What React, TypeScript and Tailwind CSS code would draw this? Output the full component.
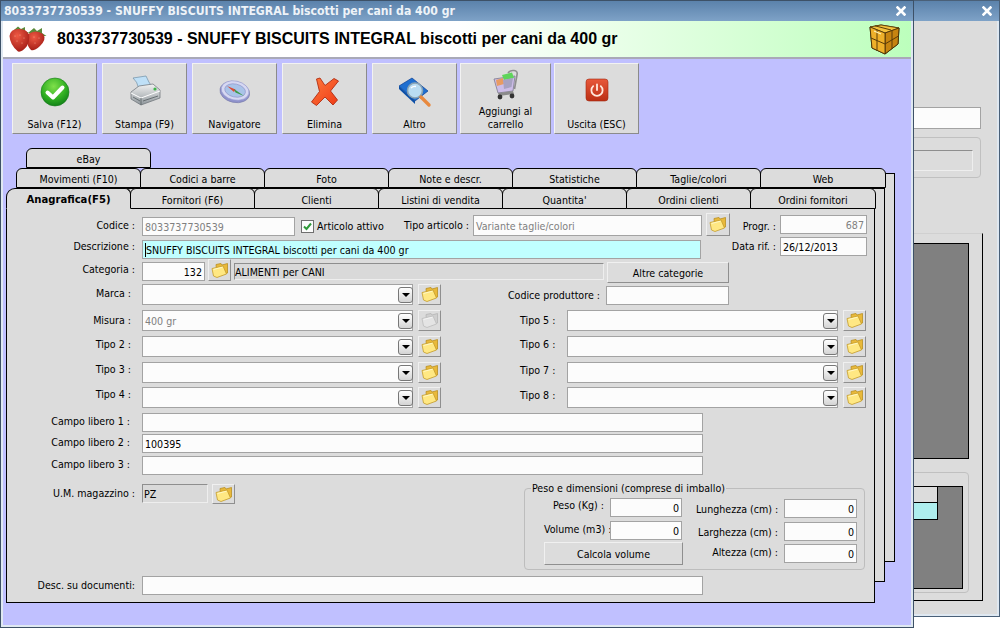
import React from "react";

const Label = ({ className = "", left = false, children }: { className?: string; left?: boolean; children: React.ReactNode }) => (
  <span className={"block shrink-0 whitespace-nowrap leading-[14px] " + (left ? "text-left " : "text-right ") + className}>{children}</span>
);

const Field = ({ className = "", cyan = false, children }: { className?: string; cyan?: boolean; children?: React.ReactNode }) => (
  <div className={"shrink-0 flex items-center px-[2px] border border-[#a3a3a3] whitespace-nowrap overflow-hidden leading-[14px] " + (cyan ? "bg-[#c0ffff] " : "bg-[#fcfcfc] ") + className}>{children}</div>
);

const Sunken = ({ className = "", children }: { className?: string; children?: React.ReactNode }) => (
  <div className={"shrink-0 flex items-center border border-t-[#8e8e8e] border-l-[#8e8e8e] border-r-[#eeeeee] border-b-[#eeeeee] bg-[#d9d9d9] leading-[14px] whitespace-nowrap " + className}>{children}</div>
);

const Btn = ({ className = "", children }: { className?: string; children?: React.ReactNode }) => (
  <div className={"shrink-0 flex items-center justify-center border border-t-[#f0f0f0] border-l-[#f0f0f0] border-r-[#8f8f8f] border-b-[#8f8f8f] bg-[#dcdcdc] leading-[14px] " + className}>{children}</div>
);

const FolderIcon = ({ gray = false }: { gray?: boolean }) => (
  <svg width="18" height="17" viewBox="0 0 18 17">
    <path d="M5 2.5 L10 1.5 L11 3 L16.5 1.5 L16.5 11 L6 14.5 Z" fill={gray ? "#cfcfcf" : "#e9b93a"} stroke={gray ? "#b5b5b5" : "#b98f22"} strokeWidth="0.8" />
    <path d="M1 6.5 L12 4 L15.5 12 L6 15.5 L2.5 14 Z" fill={gray ? "#e4e4e4" : "#ffe883"} stroke={gray ? "#bdbdbd" : "#c49c2c"} strokeWidth="0.8" />
    <path d="M2.5 7.5 L11.5 5.2" stroke={gray ? "#f4f4f4" : "#fff7c4"} strokeWidth="1" />
  </svg>
);

const Folder = ({ className = "", gray = false }: { className?: string; gray?: boolean }) => (
  <Btn className={className}><FolderIcon gray={gray} /></Btn>
);

const Combo = ({ className = "", text }: { className?: string; text?: string }) => (
  <div className={"shrink-0 flex items-center justify-between pl-[2px] h-[21px] border border-[#a3a3a3] bg-[#fcfcfc] leading-[14px] " + className}>
    <span className="text-[#808080]">{text}</span>
    <span className="-mr-px flex items-center justify-center w-[15px] h-[16px] rounded-[3px] border border-[#777777] bg-gradient-to-b from-[#ffffff] to-[#d4d4d4]">
      <span className="block w-0 h-0 border-x-[4px] border-x-transparent border-t-[4px] border-t-black" />
    </span>
  </div>
);

const Tab = ({ children, wide = false, active = false }: { children: React.ReactNode; wide?: boolean; active?: boolean }) => (
  <div
    className={
      "shrink-0 -mr-px flex items-center justify-center pt-[2px] rounded-t-[6px] border border-black leading-[14px] bg-[#dcdcdc] " +
      (wide ? "w-[126px] " : "w-[125px] ") +
      (active ? "border-b-[#dcdcdc] font-bold text-[11.2px] relative z-10 rounded-tl-[9px]" : "")
    }
  >
    {children}
  </div>
);

const CheckIcon = () => (
  <svg width="32" height="32" viewBox="0 0 32 32">
    <defs>
      <radialGradient id="chk" cx="45%" cy="30%" r="75%">
        <stop offset="0" stopColor="#7fe04a" />
        <stop offset="0.6" stopColor="#2fae22" />
        <stop offset="1" stopColor="#0d7a16" />
      </radialGradient>
    </defs>
    <circle cx="16" cy="16" r="14" fill="url(#chk)" stroke="#1a7a1e" strokeWidth="0.6" />
    <path d="M8.5 16.5 L14 21.5 L23.5 11.5" fill="none" stroke="#ffffff" strokeWidth="4" strokeLinejoin="round" strokeLinecap="round" />
  </svg>
);

const PrinterIcon = () => (
  <svg width="32" height="32" viewBox="0 0 32 32">
    <defs>
      <linearGradient id="pr" x1="0" y1="0" x2="0" y2="1">
        <stop offset="0" stopColor="#f2f2f2" />
        <stop offset="1" stopColor="#8f979c" />
      </linearGradient>
    </defs>
    <path d="M4 3 L17 1 Q20 8 22.5 11 L10 14 Q8 6 4 3Z" fill="#bfe0f7" stroke="#6f8fa6" strokeWidth="0.7" />
    <path d="M2 17 L10 11 L24 9 L31 15 L31 23 L12 30 L2 24Z" fill="url(#pr)" stroke="#686f74" strokeWidth="0.7" />
    <path d="M2 18 L12 23 L31 16" fill="none" stroke="#ffffff" strokeWidth="1" />
    <path d="M12 23 L12 30 M4 22 L11 26 M14 26 L29 21" stroke="#5f666a" strokeWidth="0.9" fill="none" />
    <circle cx="26" cy="14" r="1.6" fill="#3fb54a" />
  </svg>
);

const CompassIcon = () => (
  <svg width="32" height="32" viewBox="0 0 32 32">
    <g transform="rotate(12 16 16)">
      <ellipse cx="16" cy="17" rx="15" ry="10.5" fill="#8f92cc" stroke="#777aa8" strokeWidth="0.6" />
      <ellipse cx="16" cy="15.5" rx="14" ry="9.5" fill="#d6d8f2" stroke="#9a9dd0" strokeWidth="0.6" />
      <ellipse cx="16" cy="15.5" rx="10.5" ry="6.5" fill="#a9c3e8" stroke="#8b8ec4" strokeWidth="0.6" />
    </g>
    <path d="M8 11 L16.5 14.5 L15 17Z" fill="#dd4a32" />
    <path d="M15 14 L25 21 L16.5 17.5Z" fill="#3c9a44" />
  </svg>
);

const CrossIcon = () => (
  <svg width="32" height="32" viewBox="0 0 32 32">
    <defs>
      <linearGradient id="crs" x1="0" y1="0" x2="1" y2="1">
        <stop offset="0" stopColor="#ff7a3c" />
        <stop offset="1" stopColor="#ee3a16" />
      </linearGradient>
    </defs>
    <path d="M7.5 3 L11 2 L16 9.5 L25 2.5 L29.5 5 L21.5 15 L28.5 24 L24 29 L16 21 L7.5 29.5 L2.5 26 L10.5 15.5 Z" fill="url(#crs)" stroke="#b12c12" strokeWidth="0.9" strokeLinejoin="round" />
  </svg>
);

const BookIcon = () => (
  <svg width="34" height="32" viewBox="0 0 34 32">
    <path d="M1 9 L14 1 L30 14 L17 24Z" fill="#1f6fd0" stroke="#0c3f94" strokeWidth="0.7" />
    <path d="M1 9 L17 24 L17 27 L1 12Z" fill="#0c4fa6" />
    <circle cx="17" cy="13.5" r="7.5" fill="#b9dcf2" stroke="#8aa4b4" strokeWidth="1.6" />
    <path d="M13 11 Q15 9 18 9.5" stroke="#ffffff" strokeWidth="1.4" fill="none" />
    <path d="M23 20 L31 28" stroke="#e8893e" strokeWidth="3.4" strokeLinecap="round" />
  </svg>
);

const CartIcon = () => (
  <svg width="26" height="31" viewBox="0 0 26 31">
    <path d="M15 4 Q17 1 21 1.5 Q25 2 24 6 L21.5 20" fill="none" stroke="#8e8e8e" strokeWidth="1.6" />
    <path d="M1 10 L22 7 L20 22 L5 24Z" fill="#cdbde8" stroke="#7c7a8e" strokeWidth="0.8" />
    <path d="M3 11 L10 9 L11 15 L4 17Z" fill="#e89b62" />
    <path d="M9 6 L19 3.5 L21 9 L11 11Z" fill="#5fd45a" />
    <path d="M10 11 L20 9 L18.5 18 L11 20Z" fill="#a7a2c2" />
    <path d="M5 24 L20 22 L21 25 L6 27Z" fill="#8b8b8b" />
    <circle cx="7" cy="28" r="2.4" fill="#333333" />
    <circle cx="19" cy="27" r="2.4" fill="#333333" />
  </svg>
);

const PowerIcon = () => (
  <svg width="24" height="24" viewBox="0 0 24 24">
    <defs>
      <linearGradient id="pw" x1="0" y1="0" x2="0" y2="1">
        <stop offset="0" stopColor="#e8583a" />
        <stop offset="1" stopColor="#bb2f14" />
      </linearGradient>
    </defs>
    <rect x="1" y="1" width="22" height="22" rx="3" fill="url(#pw)" stroke="#a12a12" strokeWidth="0.6" />
    <path d="M8.2 8.2 A5.6 5.6 0 1 0 15.8 8.2" fill="none" stroke="#ffe8dc" strokeWidth="1.8" strokeLinecap="round" />
    <path d="M12 6.5 L12 12" stroke="#ffe8dc" strokeWidth="1.8" strokeLinecap="round" />
  </svg>
);

const Strawberries = () => (
  <svg width="38" height="26" viewBox="0 0 38 26" className="shrink-0">
    <defs>
      <radialGradient id="st" cx="40%" cy="30%" r="75%">
        <stop offset="0" stopColor="#ef5a44" />
        <stop offset="1" stopColor="#a11a14" />
      </radialGradient>
    </defs>
    <path d="M19 7 L25 2 L28 5 L33 2 L33 7 L37.5 10 L30 10Z" fill="#5a8a3a" />
    <path d="M19 8 Q27 3 34 8 Q38 13 31 20 Q25 25.5 22 24 Q18 20 18 14Z" fill="url(#st)" />
    <path d="M5 4 L9 0.5 L12 3 L16 1 L16 5 L20 7 L14 7Z" fill="#5a8a3a" />
    <path d="M0.5 10 Q1.5 3 9 3 Q18 2.5 20 9 Q21 15 18 20 Q13 26.5 9 25.5 Q1 19 0.5 10Z" fill="url(#st)" />
    <g fill="#f7b59a">
      <circle cx="6" cy="10" r="0.5" /><circle cx="11" cy="9" r="0.5" /><circle cx="15" cy="12" r="0.5" />
      <circle cx="8" cy="15" r="0.5" /><circle cx="13" cy="17" r="0.5" /><circle cx="25" cy="11" r="0.5" />
      <circle cx="30" cy="12" r="0.5" /><circle cx="26" cy="17" r="0.5" />
    </g>
  </svg>
);

const Cube = () => (
  <svg width="31" height="31" viewBox="0 0 31 31" className="shrink-0">
    <path d="M1 3 L12 1 L30 4 L29 20 L16 30 L3 24Z" fill="#dc9c1c" stroke="#3f2a06" strokeWidth="1" strokeLinejoin="round" />
    <path d="M1 3 L12 1 L30 4 L16 9Z" fill="#f4c13e" stroke="#5a3c08" strokeWidth="0.8" />
    <path d="M16 9 L30 4 L29 20 L16 30Z" fill="#c68410" stroke="#3f2a06" strokeWidth="0.8" />
    <path d="M1 3 L16 9 L16 30 L3 24Z" fill="#eeb02a" stroke="#3f2a06" strokeWidth="0.8" />
    <path d="M2 14 L16 20 L29.5 12 M8 6 L8 27 M23 6.5 L23 25 M6 1.8 L22 6" fill="none" stroke="#5a3c08" strokeWidth="1" />
    <path d="M5 7 L12 10" stroke="#fff2b8" strokeWidth="1.2" />
  </svg>
);

const CloseX = () => (
  <span className="flex items-center justify-center w-[10px] h-[10px]">
    <svg width="10" height="10" viewBox="0 0 10 10">
      <path d="M1.5 1.5 L8.5 8.5 M8.5 1.5 L1.5 8.5" stroke="#ffffff" strokeWidth="2.6" strokeLinecap="square" />
    </svg>
  </span>
);

const TitleBar = ({ children, className = "" }: { children?: React.ReactNode; className?: string }) => (
  <div className={"flex items-center justify-between h-[20px] shrink-0 bg-gradient-to-b from-[#5b82ab] to-[#7ea2c7] " + className}>{children}</div>
);

const ToolButton = ({ className = "", iconClass = "", icon, children }: { className?: string; iconClass?: string; icon: React.ReactNode; children: React.ReactNode }) => (
  <div className={"shrink-0 h-[71px] flex flex-col items-center border border-t-[#f2f2f2] border-l-[#f2f2f2] border-r-[#8b8b8b] border-b-[#8b8b8b] bg-[#dcdcdc] pb-[2px] text-center leading-[13px] " + className}>
    <div className={"flex justify-center " + iconClass}>{icon}</div>
    <div className="mt-auto">{children}</div>
  </div>
);

export default function App() {
  return (
    <div className="relative w-[1004px] h-[628px] overflow-hidden bg-white text-black text-[10.6px] [font-family:'DejaVu_Sans',Verdana,sans-serif] [font-stretch:condensed]">
      {/* window behind */}
      <div className="absolute left-[500px] top-0 w-[500px] h-[617px] flex flex-col border border-[#4a6078] bg-[#dfe8f1]">
        <TitleBar className="justify-end pr-[7px]"><CloseX /></TitleBar>
        <div className="flex-1 mr-[2px] mb-[2px] flex flex-col items-end bg-[#dcdcdc]">
          <div className="mt-[86px] mr-[16px] w-[300px] h-[22px] border border-[#a3a3a3] bg-[#fcfcfc]" />
          <div className="mt-[8px] mr-[16px] w-[300px] h-[41px] rounded-[4px] border border-[#c0c0c0] flex justify-end items-start pt-[12px] pr-[7px]">
            <div className="w-[200px] h-[21px] border border-t-[#8e8e8e] border-l-[#8e8e8e] border-r-[#eeeeee] border-b-[#eeeeee]" />
          </div>
          <div className="mt-[55px] mr-[14px] w-[300px] h-[368px] flex flex-col items-end border-t border-t-[#d0d0d0] border-r border-r-black border-b border-b-black">
            <div className="mt-[9px] mr-[13px] w-[200px] h-[216px] border border-black bg-[#808080]" />
            <div className="mt-[13px] mr-[13px] w-[200px] h-[121px] rounded-[4px] border border-[#c0c0c0] flex justify-end pt-[13px] pr-[5px]">
              <div className="w-[150px] h-[103px] border border-black bg-[#808080] flex flex-col items-end">
                <div className="w-full pr-[24px]">
                  <div className="w-full h-[16px] border-r border-b border-black bg-[#dcdcdc]" />
                  <div className="w-full h-[17px] border-r border-b border-black bg-[#aeeeee]" />
                </div>
              </div>
            </div>
          </div>
        </div>
      </div>

      {/* main window */}
      <div className="absolute left-0 top-0 w-[914px] h-[628px] flex flex-col border border-[#3d5167] bg-[#dfe8f1]">
        <TitleBar className="pl-[3px] pr-[7px]">
          <span className="font-bold text-[12.15px] text-[#eef3f8] whitespace-nowrap">8033737730539 - SNUFFY BISCUITS INTEGRAL biscotti per cani da 400 gr</span>
          <CloseX />
        </TitleBar>
        <div className="flex-1 flex flex-col mx-[2px] mb-[2px] min-h-0">
          <div className="h-[38px] shrink-0 flex items-center pl-[6px] pr-[11px] border-b-2 border-b-[#a9a9b8] bg-gradient-to-r from-[#ffffff] via-[#ffffff] to-[#bcffbc]">
            <Strawberries />
            <span className="ml-[10px] [font-family:'Liberation_Sans',Arial,sans-serif] [font-stretch:normal] font-bold text-[16px] whitespace-nowrap">8033737730539 - SNUFFY BISCUITS INTEGRAL biscotti per cani da 400 gr</span>
            <span className="ml-auto"><Cube /></span>
          </div>
          <div className="flex-1 flex flex-col bg-[#c0c0ff] min-h-0">
            {/* toolbar */}
            <div className="flex pl-[9px] pt-[4px] shrink-0">
              <ToolButton className="w-[85px]" iconClass="mt-[12px]" icon={<CheckIcon />}>Salva (F12)</ToolButton>
              <ToolButton className="w-[85px] ml-[5px]" iconClass="mt-[11px]" icon={<PrinterIcon />}>Stampa (F9)</ToolButton>
              <ToolButton className="w-[85px] ml-[5px]" iconClass="mt-[11px]" icon={<CompassIcon />}>Navigatore</ToolButton>
              <ToolButton className="w-[85px] ml-[5px]" iconClass="mt-[12px]" icon={<CrossIcon />}>Elimina</ToolButton>
              <ToolButton className="w-[85px] ml-[5px]" iconClass="mt-[13px]" icon={<BookIcon />}>Altro</ToolButton>
              <ToolButton className="w-[91px] ml-[3px]" iconClass="mt-[5px]" icon={<CartIcon />}>Aggiungi al<br />carrello</ToolButton>
              <ToolButton className="w-[85px] ml-[3px]" iconClass="mt-[14px]" icon={<PowerIcon />}>Uscita (ESC)</ToolButton>
            </div>

            {/* tab control */}
            <div className="relative mt-[14px] ml-[3px] w-[889px] shrink-0">
              <div className="absolute left-[20px] top-[25px] w-[869px] h-[389px] border border-black bg-[#dcdcdc]" />
              <div className="absolute left-[10px] top-[40px] w-[869px] h-[394px] border border-black bg-[#dcdcdc]" />

              <div className="relative flex pl-[20px] h-[20px]">
                <Tab>eBay</Tab>
              </div>
              <div className="relative flex pl-[10px] h-[20px]">
                <Tab>Movimenti (F10)</Tab><Tab>Codici a barre</Tab><Tab>Foto</Tab><Tab>Note e descr.</Tab><Tab>Statistiche</Tab><Tab>Taglie/colori</Tab><Tab wide>Web</Tab>
              </div>
              <div className="relative flex h-[21px]">
                <Tab active>Anagrafica(F5)</Tab><Tab>Fornitori (F6)</Tab><Tab>Clienti</Tab><Tab>Listini di vendita</Tab><Tab>Quantita'</Tab><Tab>Ordini clienti</Tab><Tab wide>Ordini fornitori</Tab>
              </div>

              {/* page */}
              <div className="relative w-[869px] h-[394px] flex flex-col border-l border-r border-b border-black bg-[#dcdcdc] pt-[4px]">
                <div className="flex">
                  <div className="w-[723px] flex flex-col">
                    <div className="flex items-start h-[23px]">
                      <Label className="w-[128px] mt-[5px]">Codice :</Label>
                      <Field className="ml-[7px] mt-[4px] w-[153px] h-[19px] text-[#808080]">8033737730539</Field>
                      <span className="ml-[6px] mt-[7px] flex items-center justify-center w-[13px] h-[13px] shrink-0 border border-[#6f6f6f] bg-[#fcfcfc]">
                        <svg width="11" height="11" viewBox="0 0 11 11"><path d="M2 5.5 L4.5 8 L9 2.5" fill="none" stroke="#2f9a3a" strokeWidth="2" /></svg>
                      </span>
                      <span className="ml-[3px] mt-[6px] w-[87px] leading-[14px] whitespace-nowrap">Articolo attivo</span>
                      <Label left className="w-[69px] mt-[5px]">Tipo articolo :</Label>
                      <Field className="mt-[2px] w-[229px] h-[21px] text-[#808080]">Variante taglie/colori</Field>
                      <Folder className="ml-[4px] w-[24px] h-[23px]" />
                    </div>
                    <div className="flex items-start mt-[4px] h-[19px]">
                      <Label className="w-[128px] -mt-[1px]">Descrizione :</Label>
                      <Field cyan className="ml-[7px] w-[559px] h-[19px]"><span className="border-l border-black">SNUFFY BISCUITS INTEGRAL biscotti per cani da 400 gr</span></Field>
                    </div>
                    <div className="flex items-start h-[24px]">
                      <Label className="w-[128px] mt-[3px]">Categoria :</Label>
                      <Field className="ml-[7px] mt-[3px] w-[63px] h-[19px] justify-end">132</Field>
                      <Folder className="ml-[3px] w-[23px] h-[22px]" />
                      <Sunken className="ml-[3px] mt-[4px] w-[370px] h-[17px]">ALIMENTI per CANI</Sunken>
                      <Btn className="ml-[3px] mt-[3px] w-[122px] h-[21px]">Altre categorie</Btn>
                    </div>
                    <div className="flex items-start mt-[1px] h-[21px]">
                      <Label className="w-[124px] mt-[2px]">Marca :</Label>
                      <Combo className="ml-[11px] w-[271px]" />
                      <Folder className="ml-[5px] w-[23px] h-[21px]" />
                      <Label className="ml-[65px] w-[94px] mt-[4px]">Codice produttore :</Label>
                      <Field className="ml-[6px] mt-[2px] w-[123px] h-[19px]" />
                    </div>
                  </div>
                  <div className="flex flex-col w-[137px]">
                    <div className="flex items-start mt-[2px]">
                      <Label className="w-[46px] mt-[4px]">Progr. :</Label>
                      <Field className="ml-[4px] w-[87px] h-[19px] justify-end text-[#808080]">687</Field>
                    </div>
                    <div className="flex items-start mt-[3px]">
                      <Label className="w-[46px] mt-[2px]">Data rif. :</Label>
                      <Field className="ml-[4px] w-[87px] h-[19px]">26/12/2013</Field>
                    </div>
                  </div>
                </div>

                {[
                  { l: "Misura :", r: "Tipo 5 :", t: "400 gr", gray: true, row: "mt-[5px]", lc: "mt-[3px]", rc: "mt-[3px]" },
                  { l: "Tipo 2 :", r: "Tipo 6 :", t: "", gray: false, row: "mt-[5px]", lc: "mt-[1px]", rc: "mt-[1px]" },
                  { l: "Tipo 3 :", r: "Tipo 7 :", t: "", gray: false, row: "mt-[5px]", lc: "mt-0", rc: "mt-[1px]" },
                  { l: "Tipo 4 :", r: "Tipo 8 :", t: "", gray: false, row: "mt-[4px]", lc: "mt-0", rc: "mt-[1px]" },
                ].map((r) => (
                  <div key={r.l} className={"flex items-start h-[21px] " + r.row}>
                    <Label className={"w-[124px] " + r.lc}>{r.l}</Label>
                    <Combo className="ml-[11px] w-[271px]" text={r.t} />
                    <Folder className="ml-[5px] w-[23px] h-[21px]" gray={r.gray} />
                    <Label left className={"ml-[79px] w-[47px] " + r.rc}>{r.r}</Label>
                    <Combo className="w-[271px]" />
                    <Folder className="ml-[5px] w-[23px] h-[21px]" />
                  </div>
                ))}

                <div className="flex items-start mt-[5px]">
                  <Label className="w-[123px] mt-[1px]">Campo libero 1 :</Label>
                  <Field className="ml-[12px] w-[561px] h-[19px]" />
                </div>
                <div className="flex items-start mt-[2px]">
                  <Label className="w-[123px] mt-[1px]">Campo libero 2 :</Label>
                  <Field className="ml-[12px] w-[561px] h-[19px]">100395</Field>
                </div>
                <div className="flex items-start mt-[3px]">
                  <Label className="w-[123px] mt-[1px]">Campo libero 3 :</Label>
                  <Field className="ml-[12px] w-[561px] h-[19px]" />
                </div>

                <div className="flex items-start mt-[9px]">
                  <Label className="w-[128px] mt-[2px]">U.M. magazzino :</Label>
                  <Sunken className="ml-[7px] w-[66px] h-[19px] pl-[1px]">PZ</Sunken>
                  <Folder className="ml-[4px] w-[23px] h-[20px]" />
                  <fieldset className="ml-[289px] -mt-[3px] w-[341px] h-[89px] rounded-[4px] border border-[#bdbdbd]">
                    <legend className="ml-[6px] px-[1px] leading-[14px] whitespace-nowrap">Peso e dimensioni (comprese di imballo)</legend>
                    <div className="flex">
                      <div className="ml-[19px] w-[139px] flex flex-col pt-[3px]">
                        <div className="flex items-start">
                          <Label className="w-[60px]">Peso (Kg) :</Label>
                          <Field className="ml-[6px] w-[72px] h-[19px] justify-end">0</Field>
                        </div>
                        <div className="flex items-start mt-[4px]">
                          <Label className="w-[60px] mt-[1px]">Volume (m3) :</Label>
                          <Field className="ml-[6px] w-[72px] h-[19px] justify-end">0</Field>
                        </div>
                        <Btn className="mt-[2px] w-[139px] h-[23px]">Calcola volume</Btn>
                      </div>
                      <div className="ml-[13px] w-[161px] flex flex-col pt-[4px]">
                        <div className="flex items-start">
                          <Label className="w-[82px] mt-[3px]">Lunghezza (cm) :</Label>
                          <Field className="ml-[6px] w-[73px] h-[19px] justify-end">0</Field>
                        </div>
                        <div className="flex items-start mt-[4px]">
                          <Label className="w-[82px] mt-[3px]">Larghezza (cm) :</Label>
                          <Field className="ml-[6px] w-[73px] h-[19px] justify-end">0</Field>
                        </div>
                        <div className="flex items-start mt-[3px]">
                          <Label className="w-[82px] mt-[1px]">Altezza (cm) :</Label>
                          <Field className="ml-[6px] w-[73px] h-[19px] justify-end">0</Field>
                        </div>
                      </div>
                    </div>
                  </fieldset>
                </div>

                <div className="flex items-start mt-[6px]">
                  <Label className="w-[128px] mt-[2px]">Desc. su documenti:</Label>
                  <Field className="ml-[7px] w-[561px] h-[19px]" />
                </div>
              </div>
            </div>
          </div>
        </div>
      </div>
    </div>
  );
}
